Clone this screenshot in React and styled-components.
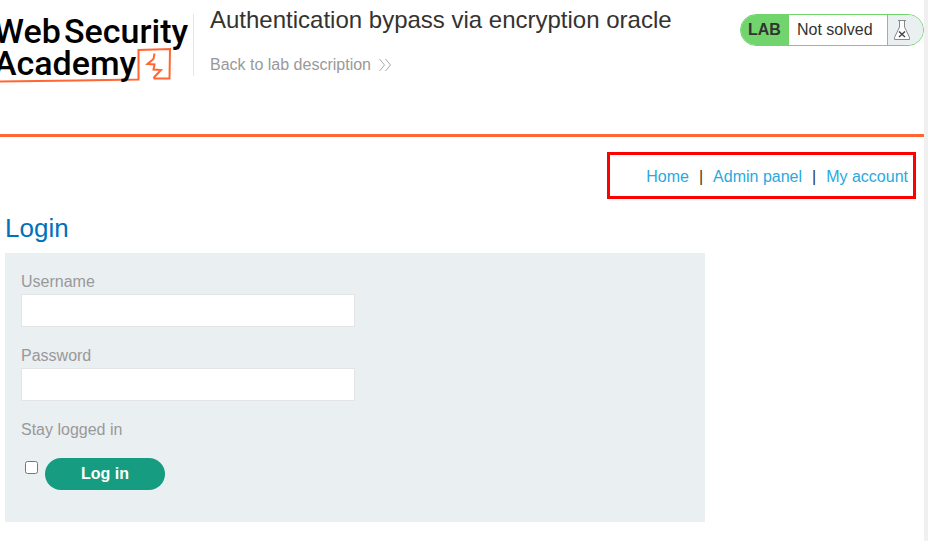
import React from "react";
import styled, { createGlobalStyle } from "styled-components";

const GlobalStyle = createGlobalStyle`
  *, *::before, *::after { box-sizing: border-box; }
  body {
    margin: 0;
    background: #fff;
    color: #333332;
    font-family: "Liberation Sans", Arial, sans-serif;
    font-size: 16px;
    line-height: 24px;
  }
`;

const Page = styled.div`
  min-height: 100vh;
  border-right: 4px solid #f0f0f0;
  overflow: hidden;
`;

const Header = styled.header`
  display: flex;
  align-items: flex-start;
  padding-top: 14px;
  min-height: 137px;
  border-bottom: 3px solid #ff6633;
`;

const LogoLink = styled.a`
  flex: none;
  width: 194px;
  height: 62px;
  border-right: 1px solid #e5e5e5;
`;

const LogoArt = styled.svg`
  display: block;
  width: 193px;
  height: 72px;
  overflow: visible;

  text {
    font-family: Roboto, "Liberation Sans", sans-serif;
    font-size: 34px;
    font-weight: 500;
    fill: #000;
  }
`;

const Heading = styled.div`
  flex: 1;
  display: flex;
  flex-direction: column;
  align-items: flex-start;
  gap: 23px;
  margin-top: -8px;
  padding-left: 16px;
`;

const Title = styled.h2`
  margin: 0;
  font-size: 24px;
  line-height: 28px;
  font-weight: 400;
`;

const BackLink = styled.a`
  display: flex;
  align-items: center;
  gap: 8px;
  line-height: 16px;
  color: #999;
  text-decoration: none;
`;

const Status = styled.div`
  display: flex;
  flex: none;
  height: 32px;
  line-height: 30px;
  border: 1px solid #72d46c;
  border-radius: 16px;
  overflow: hidden;
`;

const StatusTag = styled.strong`
  width: 48px;
  padding-left: 7px;
  background: #72d46c;
`;

const StatusText = styled.span`
  width: 99px;
  padding-left: 8px;
  border-right: 1px solid #72d46c;
`;

const StatusIcon = styled.span`
  width: 35px;
  padding: 4px 0 0 5px;
  background: #eaeff2;

  svg { display: block; }
`;

const Nav = styled.nav`
  display: flex;
  gap: 10px;
  width: fit-content;
  margin: 15px 8px 0 auto;
  padding: 10px 5px 7px 36px;
  border: 3px solid #f00;
  line-height: 24px;
`;

const NavLink = styled.a`
  color: #29a9e0;
  text-decoration: none;
`;

const Separator = styled.span`
  color: #333332;
`;

const Main = styled.main`
  max-width: 710px;
  padding: 14px 5px 0;
`;

const LoginTitle = styled.h1`
  margin: 0 0 10px;
  font-size: 26px;
  line-height: 30px;
  font-weight: 400;
  color: #0071bc;
`;

const LoginForm = styled.form`
  padding: 18px 16px 32px;
  background: #eaeff2;
  color: #999;
`;

const Field = styled.div`
  display: flex;
  flex-direction: column;
  margin-bottom: 18px;
`;

const Label = styled.label`
  display: block;
  line-height: 22px;
  padding-bottom: 1px;
`;

const TextInput = styled.input`
  width: 50%;
  height: 33px;
  padding: 4px 8px;
  border: 1px solid #e4e4e4;
  border-radius: 0;
  background: #fff;
  font: inherit;
`;

const Actions = styled.div`
  display: flex;
  align-items: flex-start;
  gap: 7px;
  padding: 16px 0 0 4px;
`;

const Checkbox = styled.input`
  width: 13px;
  height: 13px;
  margin: 3px 0 0;
`;

const SubmitButton = styled.button`
  width: 120px;
  height: 32px;
  border: 0;
  border-radius: 16px;
  background: #169c80;
  color: #fff;
  font: inherit;
  font-weight: 700;
`;

function Logo() {
  return (
    <LogoArt viewBox="0 0 193 72" role="img" aria-label="Web Security Academy">
      <path
        d="M0 67.500 C50 67 90 66 138.500 65.500 L138.500 36 L170 35 L169.500 64.500 L153.500 64.500"
        fill="none"
        stroke="#ff6633"
        strokeWidth="2"
      />
      <path
        d="M154.500 39.500 L153.500 45 L147.500 50 L154.500 50.500 L153.500 55.500 L161 56 L153.500 64"
        fill="none"
        stroke="#ff6633"
        strokeWidth="2"
      />
      <text x="-6" y="29">Web</text>
      <text x="64" y="29">Security</text>
      <text x="-6" y="61">Academy</text>
    </LogoArt>
  );
}

function Chevrons() {
  return (
    <svg width="14" height="14" viewBox="0 0 14 14" fill="none" stroke="#aaa" aria-hidden="true">
      <path d="M0.500 1 L5.500 7 L0.500 13 M6.500 1 L11.500 7 L6.500 13" />
    </svg>
  );
}

function Flask() {
  return (
    <svg width="18" height="22" viewBox="0 0 18 22" aria-hidden="true">
      <path
        d="M6.500 2 V8 L1.500 18.500 V20.500 H16.500 V18.500 L11.500 8 V2"
        fill="#fff"
        stroke="#888"
      />
      <path d="M5 1.500 H13" stroke="#888" />
      <path d="M6 12.500 L12 18 M12 12.500 L6 18" stroke="#444" strokeWidth="1.400" />
    </svg>
  );
}

export default function App() {
  return (
    <>
      <GlobalStyle />
      <Page>
        <Header>
          <LogoLink href="#academy"><Logo /></LogoLink>
          <Heading>
            <Title>Authentication bypass via encryption oracle</Title>
            <BackLink href="#description">
              Back to lab description
              <Chevrons />
            </BackLink>
          </Heading>
          <Status>
            <StatusTag>LAB</StatusTag>
            <StatusText>Not solved</StatusText>
            <StatusIcon><Flask /></StatusIcon>
          </Status>
        </Header>
        <Nav>
          <NavLink href="#home">Home</NavLink>
          <Separator>|</Separator>
          <NavLink href="#admin">Admin panel</NavLink>
          <Separator>|</Separator>
          <NavLink href="#account">My account</NavLink>
        </Nav>
        <Main>
          <LoginTitle>Login</LoginTitle>
          <LoginForm onSubmit={(event) => event.preventDefault()}>
            <Field>
              <Label htmlFor="username">Username</Label>
              <TextInput id="username" name="username" type="text" />
            </Field>
            <Field>
              <Label htmlFor="password">Password</Label>
              <TextInput id="password" name="password" type="password" />
            </Field>
            <Label htmlFor="stay">Stay logged in</Label>
            <Actions>
              <Checkbox id="stay" name="stay" type="checkbox" />
              <SubmitButton type="submit">Log in</SubmitButton>
            </Actions>
          </LoginForm>
        </Main>
      </Page>
    </>
  );
}
